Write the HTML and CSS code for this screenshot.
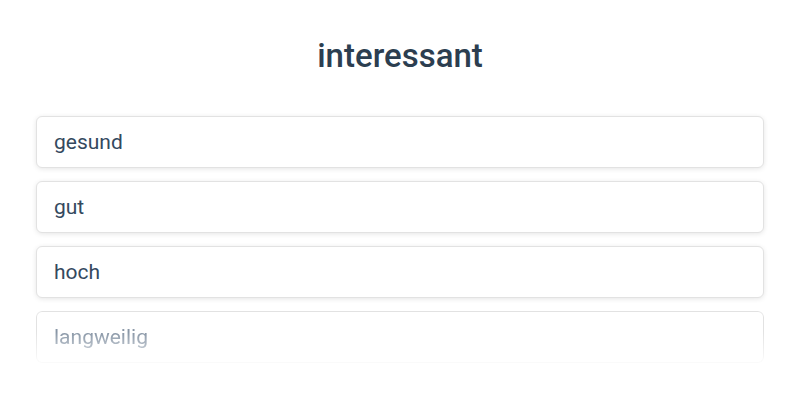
FILE: index.html
```html
<!DOCTYPE html>
<html>
<head>
<meta charset="utf-8">
<link rel="stylesheet" href="styles.css">
</head>
<body>
<div class="page">
  <h1 class="title">interessant</h1>
  <div class="list">
    <div class="item">gesund</div>
    <div class="item">gut</div>
    <div class="item">hoch</div>
    <div class="item faded">langweilig</div>
  </div>
</div>
</body>
</html>
```
FILE: styles.css
```css
html, body {
  margin: 0;
  padding: 0;
  background: #ffffff;
}
body {
  font-family: Roboto, "Liberation Sans", sans-serif;
  color: #2c3e50;
}
.page {
  padding: 36px 36px 0 36px;
}
.title {
  margin: 0 0 40px 0;
  text-align: center;
  font-size: 33px;
  font-weight: 500;
  line-height: 40px;
  color: #2c3e50;
}
.list {
  display: flex;
  flex-direction: column;
  gap: 13px;
}
.item {
  height: 50px;
  border: 1px solid #e2e2e2;
  border-radius: 6px;
  box-shadow: 0 1px 5px rgba(0,0,0,0.1);
  background: #fff;
  padding: 0 17px;
  display: flex;
  align-items: center;
  font-size: 21px;
  color: #34495e;
}
.faded {
  color: #8795a5;
  -webkit-mask-image: linear-gradient(to bottom, #000 40%, rgba(0,0,0,0.15) 100%);
  mask-image: linear-gradient(to bottom, #000 40%, rgba(0,0,0,0.15) 100%);
}
```
